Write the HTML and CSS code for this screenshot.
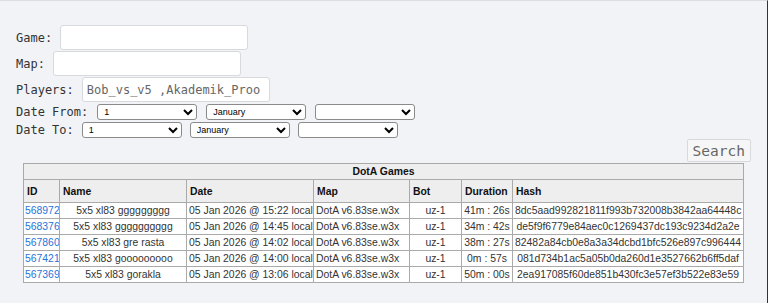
FILE: index.html
```html
<!DOCTYPE html>
<html lang="en">
<head>
    <meta charset="UTF-8">
    <title>DotA Games</title>
    <link rel="stylesheet" href="styles.css">
</head>
<body>
<div class="search-form">
    <div class="field">
        <label>Game:</label>
        <input type="text" class="text-input">
    </div>
    <div class="field">
        <label>Map:</label>
        <input type="text" class="text-input">
    </div>
    <div class="field">
        <label>Players:</label>
        <input type="text" class="text-input" value="Bob_vs_v5 ,Akademik_Proo">
    </div>
    <div class="field date-from">
        <label>Date From:</label>
        <select><option>1</option></select>
        <select><option>January</option></select>
        <select><option></option></select>
    </div>
    <div class="field date-to">
        <label>Date To:</label>
        <select><option>1</option></select>
        <select><option>January</option></select>
        <select><option></option></select>
    </div>
    <div class="actions">
        <button class="search-btn">Search</button>
    </div>
</div>

<table class="games">
    <colgroup>
        <col class="c-id">
        <col class="c-name">
        <col class="c-date">
        <col class="c-map">
        <col class="c-bot">
        <col class="c-dur">
        <col class="c-hash">
    </colgroup>
    <tr><th colspan="7" class="caption">DotA Games</th></tr>
    <tr class="head">
        <th>ID</th>
        <th>Name</th>
        <th>Date</th>
        <th>Map</th>
        <th>Bot</th>
        <th>Duration</th>
        <th>Hash</th>
    </tr>
    <tr>
        <td><a href="#">568972</a></td>
        <td class="center">5x5 xl83 ggggggggg</td>
        <td>05 Jan 2026 @ 15:22 local</td>
        <td>DotA v6.83se.w3x</td>
        <td class="center">uz-1</td>
        <td class="center">41m : 26s</td>
        <td class="center">8dc5aad992821811f993b732008b3842aa64448c</td>
    </tr>
    <tr>
        <td><a href="#">568376</a></td>
        <td class="center">5x5 xl83 gggggggggg</td>
        <td>05 Jan 2026 @ 14:45 local</td>
        <td>DotA v6.83se.w3x</td>
        <td class="center">uz-1</td>
        <td class="center">34m : 42s</td>
        <td class="center">de5f9f6779e84aec0c1269437dc193c9234d2a2e</td>
    </tr>
    <tr>
        <td><a href="#">567860</a></td>
        <td class="center">5x5 xl83 gre rasta</td>
        <td>05 Jan 2026 @ 14:02 local</td>
        <td>DotA v6.83se.w3x</td>
        <td class="center">uz-1</td>
        <td class="center">38m : 27s</td>
        <td class="center">82482a84cb0e8a3a34dcbd1bfc526e897c996444</td>
    </tr>
    <tr>
        <td><a href="#">567421</a></td>
        <td class="center">5x5 xl83 gooooooooo</td>
        <td>05 Jan 2026 @ 14:00 local</td>
        <td>DotA v6.83se.w3x</td>
        <td class="center">uz-1</td>
        <td class="center">0m : 57s</td>
        <td class="center">081d734b1ac5a05b0da260d1e3527662b6ff5daf</td>
    </tr>
    <tr>
        <td><a href="#">567369</a></td>
        <td class="center">5x5 xl83 gorakla</td>
        <td>05 Jan 2026 @ 13:06 local</td>
        <td>DotA v6.83se.w3x</td>
        <td class="center">uz-1</td>
        <td class="center">50m : 00s</td>
        <td class="center">2ea917085f60de851b430fc3e57ef3b522e83e59</td>
    </tr>
</table>
</body>
</html>
```

FILE: styles.css
```css
html {
    background-color: #f2f3f7;
    border-top: 1px solid #dcdde2;
    border-right: 1px solid #333;
    height: 100%;
    box-sizing: border-box;
}
body {
    margin: 0;
    padding: 24px 16px 0 16px;
    font-family: "DejaVu Sans Mono", monospace;
    font-size: 12px;
    color: #333;
}
.field {
    display: flex;
    align-items: center;
    margin-bottom: 1px;
}
.field label {
    margin-right: 8px;
    white-space: pre;
}
.text-input {
    width: 188px;
    height: 25px;
    box-sizing: border-box;
    padding: 2px 4px;
    border: 1px solid #d8d9dd;
    border-radius: 3px;
    background-color: #fff;
    font-family: "DejaVu Sans Mono", monospace;
    font-size: 12px;
    color: #666;
}
.field select {
    width: 100px;
    height: 16px;
    box-sizing: border-box;
    margin-right: 9px;
    padding: 0 2px;
    border: 1px solid #8a8a8a;
    border-radius: 3px;
    background-color: #fff;
    font-family: "Liberation Sans", Arial, sans-serif;
    font-size: 9px;
    color: #000;
}
.date-from {
    margin-top: 2px;
}
.date-from label {
    margin-right: 9px;
}
.date-to {
    margin-top: 2px;
}
.date-to select {
    margin-right: 8px;
}
.actions {
    display: flex;
    justify-content: flex-end;
    margin-top: 1px;
}
.search-btn {
    height: 23px;
    padding: 0 5px;
    border: 1px solid #d8d9dd;
    border-radius: 2px;
    background-color: #f6f6f6;
    font-family: "DejaVu Sans Mono", monospace;
    font-size: 14.5px;
    color: #666;
}
.games {
    width: 721px;
    table-layout: fixed;
    margin: 1px auto 0 auto;
    border-collapse: collapse;
    border: 1px solid #999;
    font-family: "Liberation Sans", Arial, sans-serif;
    font-size: 10.4px;
    color: #333;
    background-color: #fff;
}
.games th {
    background-color: #eeeeee;
    font-weight: bold;
    text-align: left;
    padding: 0 3px;
    border: 1px solid #aaa;
    color: #111;
}
.games th.caption {
    text-align: center;
    height: 15px;
}
.games tr.head th {
    height: 22px;
}
.c-id { width: 36px; }
.c-name { width: 127px; }
.c-date { width: 127px; }
.c-map { width: 96px; }
.c-bot { width: 52px; }
.c-dur { width: 51px; }
.games td {
    border: 1px solid #aaa;
    padding: 0 2px;
    height: 15px;
    white-space: nowrap;
    overflow: hidden;
}
.games td:first-child {
    padding: 0 1px;
}
.games td.center {
    text-align: center;
}
.games a {
    color: #1f74d8;
    text-decoration: none;
}
```
